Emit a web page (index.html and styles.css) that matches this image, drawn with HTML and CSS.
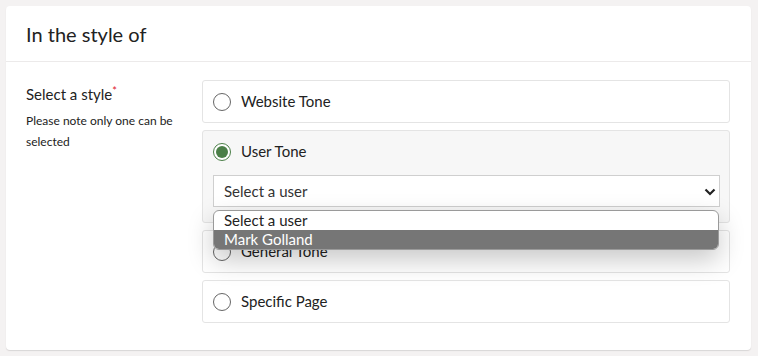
FILE: index.html
```html
<!DOCTYPE html>
<html>
<head>
<meta charset="utf-8">
<link rel="stylesheet" href="styles.css">
</head>
<body>
<div class="card">
  <div class="card-header"><h2 class="title">In the style of</h2></div>
  <div class="card-body">
    <div class="label-col">
      <div class="label">Select a style<span class="req">*</span></div>
      <div class="note">Please note only one can be selected</div>
    </div>
    <div class="options">
      <div class="option"><span class="radio"></span><span class="opt-text">Website Tone</span></div>
      <div class="option option-active">
        <div class="opt-row"><span class="radio radio-on"><span class="dot"></span></span><span class="opt-text">User Tone</span></div>
        <div class="select-wrap">
          <div class="select"><span>Select a user</span>
            <svg class="chev" width="12" height="8" viewBox="0 0 12 8"><path d="M1.5 1.5 L6 6 L10.5 1.5" fill="none" stroke="#222" stroke-width="2.2"/></svg>
          </div>
          <div class="dropdown">
            <div class="dd-item">Select a user</div>
            <div class="dd-item dd-hl">Mark Golland</div>
          </div>
        </div>
      </div>
      <div class="option"><span class="radio"></span><span class="opt-text">General Tone</span></div>
      <div class="option"><span class="radio"></span><span class="opt-text">Specific Page</span></div>
    </div>
  </div>
</div>
</body>
</html>
```
FILE: styles.css
```css
html, body { margin: 0; padding: 0; }
body {
  background: #f4f2f2;
  font-family: Lato, "Open Sans", sans-serif;
  color: #222;
  padding: 6px 7px 6px 6px;
}
.card {
  background: #fff;
  border-radius: 4px;
  box-shadow: 0 1px 1px #d8d6d6;
  height: 344px;
  box-sizing: border-box;
}
.card-header {
  height: 56px;
  border-bottom: 1px solid #eceaea;
  box-sizing: border-box;
  display: flex;
  align-items: center;
  padding-left: 20px;
}
.title {
  margin: 0;
  font-size: 20px;
  font-weight: 400;
  color: #222;
  padding-top: 1px;
}
.card-body {
  display: flex;
  padding: 18px 21px 0 20px;
}
.label-col {
  width: 176px;
  flex: none;
  padding-top: 4px;
}
.label {
  font-size: 15px;
  line-height: 20px;
  color: #222;
}
.req { color: #e0202a; font-size: 11px; vertical-align: top; line-height: 14px; }
.note {
  font-size: 12px;
  line-height: 21px;
  margin-top: 6px;
  width: 160px;
  color: #222;
}
.options {
  flex: 1;
  display: flex;
  flex-direction: column;
  gap: 7px;
}
.option {
  border: 1px solid #e4e4e4;
  border-radius: 3px;
  height: 43px;
  box-sizing: border-box;
  display: flex;
  align-items: center;
  padding-left: 10px;
}
.option-active {
  height: 93px;
  background: #f7f7f7;
  flex-direction: column;
  align-items: stretch;
  padding: 0 9px 0 10px;
}
.opt-row {
  display: flex;
  align-items: center;
  height: 42px;
  padding-bottom: 1px;
  box-sizing: border-box;
}
.radio {
  width: 18px;
  height: 18px;
  box-sizing: border-box;
  border: 1px solid #666;
  border-radius: 50%;
  background: #fff;
  flex: none;
  display: flex;
  align-items: center;
  justify-content: center;
}
.radio-on { border-color: #4b7f48; }
.dot { width: 12px; height: 12px; border-radius: 50%; background: #4b7f48; }
.opt-text {
  font-size: 15px;
  margin-left: 10px;
  color: #222;
  padding-bottom: 1px;
}
.select-wrap { position: relative; margin-top: 2px; }
.select {
  height: 32px;
  box-sizing: border-box;
  border: 1px solid #cfcfcf;
  background: #fff;
  display: flex;
  align-items: center;
  justify-content: space-between;
  padding: 0 3px 0 10px;
  font-size: 15px;
  color: #333;
}
.chev { margin-top: 1px; }
.dropdown {
  position: absolute;
  left: 0;
  right: 1px;
  top: 35px;
  background: #fff;
  border: 1px solid #9a9a9a;
  border-radius: 6px;
  overflow: hidden;
  box-shadow: 0 10px 26px rgba(0,0,0,0.22);
  z-index: 2;
}
.dd-item {
  font-size: 15px;
  line-height: 19px;
  padding-left: 10px;
  color: #222;
}
.dd-hl { background: #767676; color: #fff; }
```
